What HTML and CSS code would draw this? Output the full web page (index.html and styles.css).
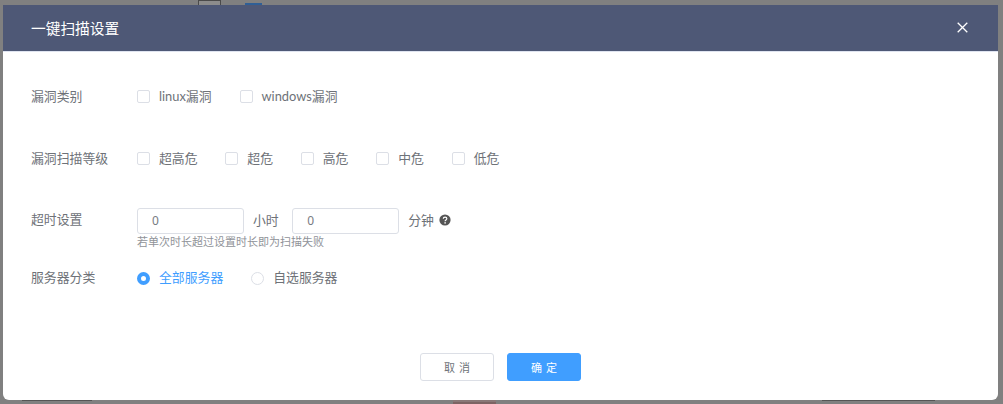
FILE: index.html
```html
<!DOCTYPE html>
<html lang="zh-CN">
<head>
<meta charset="utf-8">
<title>一键扫描设置</title>
<link rel="stylesheet" href="styles.css">
</head>
<body>
<div class="backdrop">
  <span class="peek peek-box"></span>
  <span class="peek peek-link"></span>
  <span class="peek peek-date-left"></span>
  <span class="peek peek-tag"></span>
  <span class="peek peek-date-right"></span>
  <section class="dialog">
    <header class="dialog-head">
      <h1 class="dialog-title">一键扫描设置</h1>
      <svg class="close" width="11" height="11" viewBox="0 0 11 11"><path d="M.7.7l9.6 9.6M10.3.7L.7 10.3" stroke="#fff" stroke-width="1.3" fill="none"/></svg>
    </header>
    <div class="dialog-body">
      <div class="row row-type">
        <span class="label">漏洞类别</span>
        <div class="options">
          <label class="opt gap-linux"><i class="check"></i>linux漏洞</label>
          <label class="opt"><i class="check"></i>windows漏洞</label>
        </div>
      </div>
      <div class="row row-level">
        <span class="label">漏洞扫描等级</span>
        <div class="options">
          <label class="opt gap-level"><i class="check"></i>超高危</label>
          <label class="opt gap-level"><i class="check"></i>超危</label>
          <label class="opt gap-level"><i class="check"></i>高危</label>
          <label class="opt gap-level"><i class="check"></i>中危</label>
          <label class="opt"><i class="check"></i>低危</label>
        </div>
      </div>
      <div class="row row-time">
        <span class="label">超时设置</span>
        <div class="time">
          <div class="time-line">
            <span class="input">0</span><span class="unit unit-hour">小时</span>
            <span class="input">0</span><span class="unit">分钟</span>
            <svg class="help" width="12" height="12" viewBox="0 0 12 12"><circle cx="6" cy="6" r="5.6" fill="#555"/><path d="M4.3 4.700c0-1 .8-1.600 1.800-1.600s1.700.6 1.700 1.500c0 1.300-1.700 1.300-1.700 2.600" stroke="#fff" stroke-width="1.200" fill="none"/><circle cx="6.100" cy="8.900" r=".8" fill="#fff"/></svg>
          </div>
          <p class="hint">若单次时长超过设置时长即为扫描失败</p>
        </div>
      </div>
      <div class="row row-server">
        <span class="label">服务器分类</span>
        <div class="options">
          <label class="opt opt-on gap-radio"><i class="radio radio-on"></i>全部服务器</label>
          <label class="opt"><i class="radio"></i>自选服务器</label>
        </div>
      </div>
    </div>
    <footer class="dialog-foot">
      <button class="btn">取 消</button>
      <button class="btn btn-primary">确 定</button>
    </footer>
  </section>
</div>
</body>
</html>
```
FILE: styles.css
```css
* { box-sizing: border-box; }
html, body { margin: 0; height: 100%; }
body { font-family: Lato, "Noto Sans CJK SC", "Noto Sans", sans-serif; font-size: 12.85px; color: #6e7278; overflow: hidden; }
.backdrop { position: relative; width: 1003px; height: 404px; background: #808080; padding: 5px 5px 4px 3px; display: flex; }
.peek { position: absolute; }
.peek-box { left: 198px; top: 0; width: 23px; height: 5px; background: #8c8c8c; border: 1px solid #4a4a4a; border-bottom: 0; }
.peek-link { left: 245px; top: 3px; width: 17px; height: 2px; background: #2f5f96; }
.peek-date-left { left: 22px; top: 400px; width: 70px; height: 1px; background: #555; }
.peek-tag { left: 453px; top: 400px; width: 43px; height: 4px; background: #8a7878; border-bottom: 2px solid #7d6464; }
.peek-date-right { left: 822px; top: 400px; width: 113px; height: 1px; background: #555; }
.dialog { position: relative; flex: 1; background: #fff; border-radius: 0 0 6px 6px; display: flex; flex-direction: column; }
.dialog-head { height: 47px; background: #4e5876; border-bottom: 1px solid #dfe4f0; padding: 0 30px 2px 28px; display: flex; align-items: center; justify-content: space-between; flex: none; }
.dialog-title { margin: 0; font-size: 14.7px; font-weight: 400; color: #fff; }
.close { display: block; }
.dialog-body { flex: 1; padding-left: 28px; }
.row { display: flex; align-items: center; }
.row-type { margin-top: 32px; height: 22px; }
.row-level { margin-top: 40px; height: 22px; }
.row-time { margin-top: 40px; align-items: flex-start; }
.row-server { margin-top: 15px; height: 22px; }
.label { width: 106px; flex: none; }
.row-time .label { line-height: 22px; }
.options { display: flex; align-items: center; }
.opt { display: flex; align-items: center; }
.opt-on { color: #409eff; }
.gap-linux { margin-right: 28px; }
.gap-level { margin-right: 27.75px; }
.gap-radio { margin-right: 28px; }
.check { width: 13px; height: 13px; border: 1px solid #dcdfe6; border-radius: 2px; margin: 2px 9px 0 0; background: #fff; display: block; }
.radio { width: 13px; height: 13px; border: 1px solid #dcdfe6; border-radius: 50%; margin: 4px 9px 0 0; background: #fff; display: block; }
.radio-on { border: 4px solid #409eff; }
.time-line { display: flex; align-items: center; height: 26px; }
.input { width: 107px; height: 26px; border: 1px solid #dcdfe6; border-radius: 3px; padding-left: 14px; line-height: 24px; font-family: "Noto Sans", sans-serif; font-size: 12px; color: #777b82; }
.unit { margin: 0 5px 0 9px; padding-bottom: 4px; }
.unit-hour { margin-right: 13.5px; }
.help { display: block; margin: -2px 0 0 0; }
.hint { margin: 0; font-size: 11px; line-height: 16px; color: #909399; }
.dialog-foot { display: flex; justify-content: center; gap: 13px; padding-bottom: 19px; flex: none; }
.btn { width: 74px; height: 28px; border: 1px solid #dcdfe6; border-radius: 3px; background: #fff; color: #6e7278; font: inherit; font-size: 11px; word-spacing: 1px; padding: 0; }
.btn-primary { background: #409eff; border-color: #409eff; color: #fff; }
```
